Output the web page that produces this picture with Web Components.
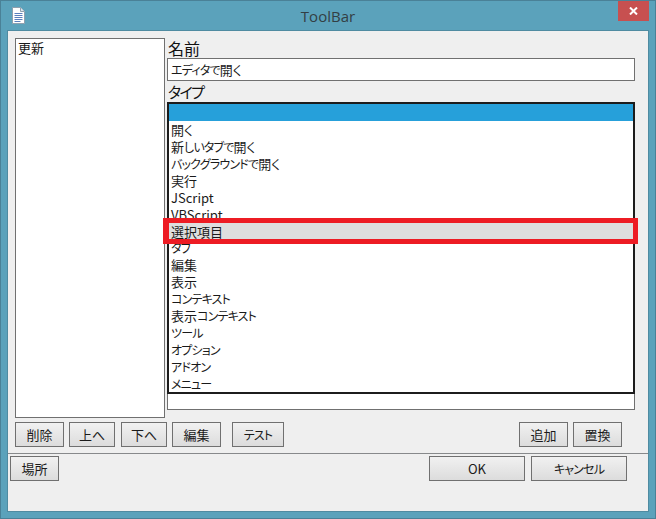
<!DOCTYPE html>
<html lang="ja">
<head>
<meta charset="utf-8">
<style>
html,body{margin:0;padding:0;background:#5ba2bb}
body{font:13px/17px "Noto Sans CJK JP","Noto Sans",sans-serif;color:#1a1a1a;font-feature-settings:"palt"}
.k{font-size:12px;letter-spacing:-.8px}
field-label .k{font-size:15px;letter-spacing:-1.6px}
</style>
</head>
<body>
<tool-window>
  <title-bar slot="title">ToolBar</title-bar>
  <div slot="list"><list-box><list-row>更新</list-row></list-box></div>
  <field-label slot="namelabel">名前</field-label>
  <text-field slot="name"><span class="k">エディタで</span>開く</text-field>
  <field-label slot="typelabel"><span class="k">タイプ</span></field-label>
  <combo-list slot="type">
    <list-row selected></list-row>
    <list-row>開く</list-row>
    <list-row>新<span class="k">しいタブで</span>開く</list-row>
    <list-row><span class="k">バックグラウンドで</span>開く</list-row>
    <list-row>実行</list-row>
    <list-row>JScript</list-row>
    <list-row>VBScript</list-row>
    <list-row hover>選択項目</list-row>
    <list-row><span class="k">タブ</span></list-row>
    <list-row>編集</list-row>
    <list-row>表示</list-row>
    <list-row><span class="k">コンテキスト</span></list-row>
    <list-row>表示<span class="k">コンテキスト</span></list-row>
    <list-row><span class="k">ツール</span></list-row>
    <list-row><span class="k">オプション</span></list-row>
    <list-row><span class="k">アドオン</span></list-row>
    <list-row><span class="k">メニュー</span></list-row>
  </combo-list>
  <push-button slot="left" style="width:49px;margin-right:5px">削除</push-button>
  <push-button slot="left" style="width:46px;margin-right:6px">上へ</push-button>
  <push-button slot="left" style="width:46px;margin-right:5px">下へ</push-button>
  <push-button slot="left" style="width:49px;margin-right:11px">編集</push-button>
  <push-button slot="left" style="width:52px"><span class="k">テスト</span></push-button>
  <push-button slot="right" style="width:49px;margin-right:5px">追加</push-button>
  <push-button slot="right" style="width:49px">置換</push-button>
  <push-button slot="place" style="width:49px">場所</push-button>
  <push-button slot="ok" style="width:96px;margin-right:6px">OK</push-button>
  <push-button slot="ok" style="width:96px"><span class="k">キャンセル</span></push-button>
</tool-window>
<script>
function def(name, css, html){
  customElements.define(name, class extends HTMLElement{
    constructor(){super();const r=this.attachShadow({mode:"open"});r.innerHTML="<style>"+css+"</style>"+html;}
  });
}
def("tool-window",`
  :host{display:block;position:relative;width:656px;height:519px;box-sizing:border-box;background:#5ba2bb;border:1px solid #4a8197;overflow:hidden}
  .client{box-sizing:border-box;width:642px;height:482px;border:1px solid #4f8ba1;background:#efefef;display:flex;flex-direction:column;margin:0 0 0 6px}
  .upper{box-sizing:border-box;height:423px;border-bottom:1px solid #87898b;padding:7px 0 0 7px}
  .columns{display:flex;gap:2px;height:380px}
  .right{width:468px;display:flex;flex-direction:column}
  .buttons{display:flex;margin-top:4px;justify-content:space-between;padding-right:26px}
  .buttons>div{display:flex}
  .footer{display:flex;justify-content:space-between;padding:2px 21px 0 2px}
  .footer>div{display:flex}
  .mark{position:absolute;left:162px;top:217px;width:475px;height:26px;box-sizing:border-box;border:5px solid #ed1c24;border-left-width:6px;pointer-events:none}
`,`
  <slot name="title"></slot>
  <div class="client">
    <div class="upper">
      <div class="columns">
        <slot name="list"></slot>
        <div class="right">
          <slot name="namelabel"></slot>
          <slot name="name"></slot>
          <slot name="typelabel"></slot>
          <slot name="type"></slot>
        </div>
      </div>
      <div class="buttons"><div><slot name="left"></slot></div><div><slot name="right"></slot></div></div>
    </div>
    <div class="footer"><div><slot name="place"></slot></div><div><slot name="ok"></slot></div></div>
  </div>
  <div class="mark"></div>
`);
def("title-bar",`
  :host{display:flex;align-items:center;justify-content:center;position:relative;height:29px;font:15px/30px "Open Sans","Noto Sans",sans-serif;color:#333f44}
  .ic{position:absolute;left:10px;top:6px;width:14px;height:17px}
  .x{position:absolute;right:6px;top:0;width:31px;height:20px;background:#c75050;display:flex;align-items:center;justify-content:center}
`,`
  <svg class="ic" viewBox="0 0 14 17"><path d="M1.5 .5H9.500L13.500 4.500V16.500H1.500Z" fill="#fff" stroke="#8fa0ae"/><path d="M9.500 .5V4.500H13.500" fill="#dfe6ee" stroke="#8fa0ae"/><path d="M3.500 6.500H11.500M3.500 8.500H11.500M3.500 10.500H11.500M3.500 12.500H11.500M3.500 14.500H9.500" stroke="#5a7fbd"/></svg>
  <slot></slot>
  <div class="x"><svg width="9" height="8" viewBox="0 0 9 8"><path d="M1 .5L8 7.500M8 .5L1 7.500" stroke="#fff" stroke-width="2" fill="none"/></svg></div>
`);
def("list-box",`
  :host{display:block;box-sizing:border-box;width:150px;height:380px;background:#fff;border:1px solid #707070}
`,`<slot></slot>`);
def("list-row",`
  :host{display:block;height:16.93px;line-height:17px;white-space:nowrap;padding-left:2px}
  :host([selected]){background:#26a0da;height:17px}
  :host([hover]){background:#dedede}
`,`<slot></slot>`);
def("field-label",`
  :host{display:block;font-size:16px;line-height:20px;height:20px;color:#111;padding-left:1px}
`,`<slot></slot>`);
def("text-field",`
  :host{display:block;box-sizing:border-box;height:23px;background:#fff;border:1px solid #707070;padding:0 3px;line-height:21px}
`,`<slot></slot>`);
def("combo-list",`
  :host{display:block;box-sizing:border-box;height:308px;background:#fff;border:1px solid #707070;margin-top:1px}
  .drop{box-sizing:border-box;height:292px;margin:-1px -1px 0;border:2px solid #1c1c1c;overflow:hidden;background:#fff}
`,`<div class="drop"><slot></slot></div>`);
def("push-button",`
  :host{display:flex;align-items:center;justify-content:center;box-sizing:border-box;height:25px;border:1px solid #707070;background:linear-gradient(#f1f1f1,#dcdcdc);white-space:nowrap}
`,`<slot></slot>`);
</script>
</body>
</html>
